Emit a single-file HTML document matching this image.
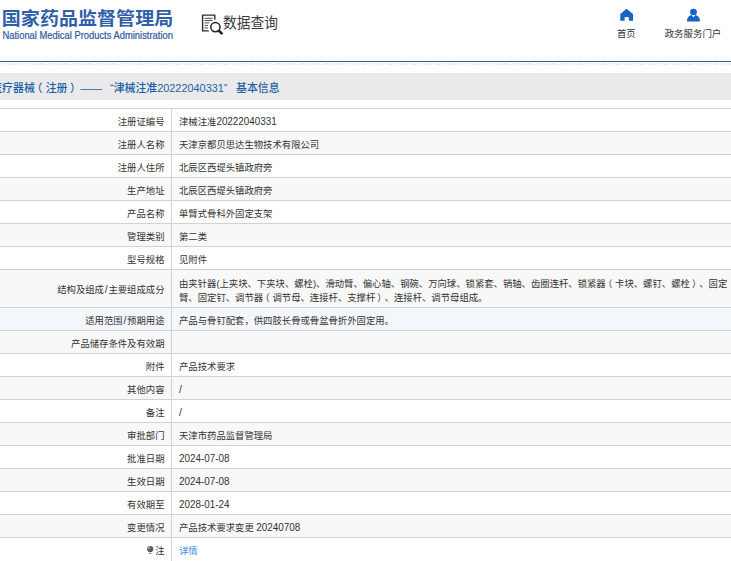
<!DOCTYPE html>
<html lang="zh-CN">
<head>
<meta charset="utf-8">
<title>国家药品监督管理局 数据查询</title>
<style>
html,body{margin:0;padding:0;}
body{width:731px;height:561px;overflow:hidden;position:relative;background:#fff;
  font-family:"Liberation Sans","Noto Sans CJK SC",sans-serif;color:#333;text-spacing-trim:space-all;}
.abs{position:absolute;white-space:nowrap;}
#logo-cn{left:1.8px;top:4.9px;font-size:19px;line-height:28px;font-weight:700;color:#2f5fa9;letter-spacing:0.05px;transform:scaleY(0.95);transform-origin:0 50%;}
#logo-en{left:2.5px;top:30px;font-size:9.4px;line-height:12px;color:#2f5aa2;transform:scaleY(1.08);transform-origin:0 78%;-webkit-text-stroke:0.2px #2f5aa2;}
#dq{left:223px;top:10.5px;font-size:15px;line-height:24px;color:#3a3a40;transform:scaleX(0.915);transform-origin:0 0;}
#nav1{left:606.2px;top:26.6px;width:40px;text-align:center;font-size:9.3px;line-height:14px;color:#333;}
#nav2{left:660px;top:26.6px;width:66px;text-align:center;font-size:9.45px;line-height:14px;color:#333;}
#blueline{left:0;top:60.6px;width:731px;height:1.7px;background:#2d5f98;}
#hatch{left:0;top:62.6px;width:731px;height:2.6px;
  background:repeating-linear-gradient(135deg,#e6e6e6 0,#e6e6e6 0.8px,#fff 0.8px,#fff 1.7px);}
#titlebar{left:0;top:72.7px;width:731px;height:27px;background:#eaeaea;}
.tt{top:75px;font-size:10.9px;line-height:27px;color:#1c5fa8;font-weight:500;}
table{position:absolute;left:-1px;top:108px;width:733px;border-collapse:collapse;table-layout:fixed;
  font-size:9.35px;color:#333;}
td{border:1px solid #d2d2d2;height:18.5px;padding:3.5px 0 0 0;line-height:14.5px;vertical-align:middle;}
td.k{width:164.5px;text-align:right;padding-right:6.5px;}
td.v{padding-left:7px;padding-right:4px;}
tr:nth-child(even) td{background:#f8f8f8;}
tr.blue td{background:#f3f6fb;}
tr.last td{height:24px;padding-top:1px;padding-bottom:3.5px;}
.sl{padding:0 0.8px;font-size:10.3px;line-height:12px;}
.sv{font-size:10.5px;line-height:12px;}
.pl{position:relative;left:-0.3em;}
.pr{position:relative;left:0.22em;}
.n{display:inline-block;font-size:9.9px;line-height:14px;transform:scaleY(1.04);transform-origin:0 75%;}
a{color:#3b8be6;text-decoration:none;}
</style>
</head>
<body>
<div class="abs" id="logo-cn">国家药品监督管理局</div>
<div class="abs" id="logo-en">National Medical Products Administration</div>

<svg class="abs" style="left:196px;top:8px" width="32" height="32" viewBox="0 0 32 32">
  <path d="M18.8 11.8 V7.1 H6.6 V22.9 H12.8" fill="none" stroke="#2b2b36" stroke-width="1.4" stroke-linejoin="round"/>
  <path d="M8.5 10.3 H16.6 M8.5 12.5 H16.6 M8.5 14.9 H13.4 M8.5 17.4 H12 M8.5 19.9 H12" stroke="#4a4a52" stroke-width="1"/>
  <circle cx="19.4" cy="19.1" r="4.6" fill="#fff" stroke="#23232e" stroke-width="1.5"/>
  <path d="M22.7 22.5 L26.4 26.2" stroke="#23232e" stroke-width="2.5" stroke-linecap="butt"/>
</svg>
<div class="abs" id="dq">数据查询</div>

<svg class="abs" style="left:610px;top:0px" width="40" height="26" viewBox="0 0 40 26">
  <path d="M16.5 8.8 L23 14 V20.8 H18.9 V18 Q18.9 17 17.9 17 H15.6 Q14.6 17 14.6 18 V20.8 H10.3 V14 Z" fill="#1463c6"/>
</svg>
<div class="abs" id="nav1">首页</div>
<svg class="abs" style="left:680px;top:0px" width="30" height="26" viewBox="0 0 30 26">
  <ellipse cx="13.5" cy="11.9" rx="3.4" ry="3.2" fill="#1463c6"/>
  <path d="M7 21.5 C7 17.5 9 15.5 11.8 15 L13.5 17.4 L15.2 15 C18 15.5 20 17.5 20 21.5 Z" fill="#1463c6"/>
</svg>
<div class="abs" id="nav2">政务服务门户</div>

<div class="abs" id="blueline"></div>
<div class="abs" id="hatch"></div>
<div class="abs" id="titlebar"></div>
<div class="abs tt" style="left:-8.8px">医疗器械<span class="pl">（</span>注册<span class="pr">）</span></div>
<div class="abs tt" style="left:80.2px">——</div>
<div class="abs tt" style="left:110px">“津械注准20222040331”</div>
<div class="abs tt" style="left:236px">基本信息</div>

<table>
<tr><td class="k">注册证编号</td><td class="v">津械注准<span class="n">20222040331</span></td></tr>
<tr><td class="k">注册人名称</td><td class="v">天津京都贝思达生物技术有限公司</td></tr>
<tr><td class="k">注册人住所</td><td class="v">北辰区西堤头镇政府旁</td></tr>
<tr><td class="k">生产地址</td><td class="v">北辰区西堤头镇政府旁</td></tr>
<tr><td class="k">产品名称</td><td class="v">单臂式骨科外固定支架</td></tr>
<tr><td class="k">管理类别</td><td class="v">第二类</td></tr>
<tr><td class="k">型号规格</td><td class="v">见附件</td></tr>
<tr><td class="k">结构及组成<span class="sl">/</span>主要组成成分</td><td class="v" style="height:31.5px;padding-top:5.5px;white-space:nowrap">由夹针器(上夹块、下夹块、螺栓)、滑动臂、偏心轴、钢碗、万向球、锁紧套、销轴、齿圈连杆、锁紧器<span class="pl">（</span>卡块、螺钉、螺栓<span class="pr">）</span>、固定<br>臂、固定钉、调节器<span class="pl">（</span>调节母、连接杆、支撑杆<span class="pr">）</span>、连接杆、调节母组成。</td></tr>
<tr class="blue"><td class="k">适用范围<span class="sl">/</span>预期用途</td><td class="v">产品与骨钉配套，供四肢长骨或骨盆骨折外固定用。</td></tr>
<tr><td class="k">产品储存条件及有效期</td><td class="v"></td></tr>
<tr><td class="k">附件</td><td class="v">产品技术要求</td></tr>
<tr><td class="k">其他内容</td><td class="v"><span class="sv">/</span></td></tr>
<tr><td class="k">备注</td><td class="v"><span class="sv">/</span></td></tr>
<tr><td class="k">审批部门</td><td class="v">天津市药品监督管理局</td></tr>
<tr><td class="k">批准日期</td><td class="v"><span class="n">2024-07-08</span></td></tr>
<tr><td class="k">生效日期</td><td class="v"><span class="n">2024-07-08</span></td></tr>
<tr><td class="k">有效期至</td><td class="v"><span class="n">2028-01-24</span></td></tr>
<tr><td class="k">变更情况</td><td class="v">产品技术要求变更 <span class="n">20240708</span></td></tr>
<tr class="last"><td class="k"><svg width="8" height="10" viewBox="0 0 8 10" style="vertical-align:-1.5px;margin-right:1px"><circle cx="4.2" cy="4.1" r="3.1" fill="#555"/><circle cx="3.2" cy="3" r="1.4" fill="#999"/><path d="M3 8.2 H5.4 V9 H3 Z" fill="#666"/></svg>注</td><td class="v"><a>详情</a></td></tr>
</table>
</body>
</html>
